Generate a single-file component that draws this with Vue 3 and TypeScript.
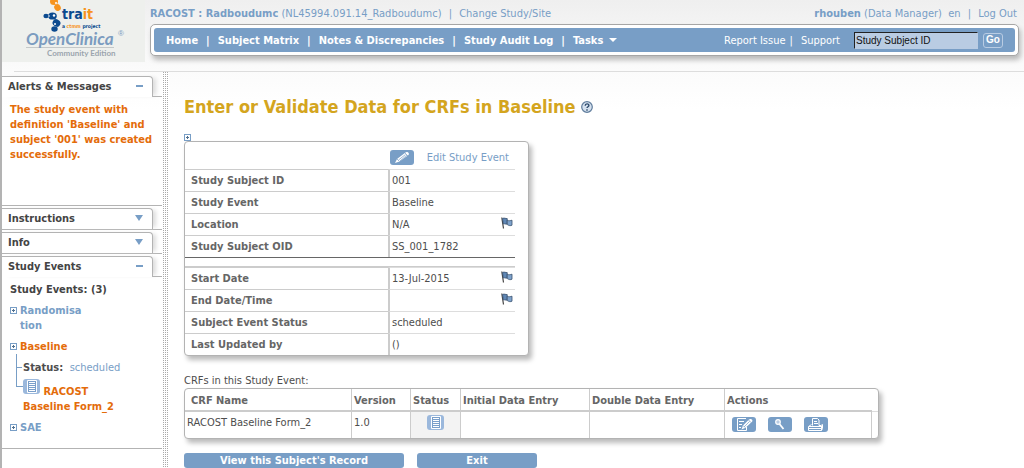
<script setup lang="ts">
interface DetailRow {
  label: string
  value: string
  flag?: boolean
}

const menu: string[] = ['Home', 'Subject Matrix', 'Notes & Discrepancies', 'Study Audit Log']

const sections: DetailRow[][] = [
  [
    { label: 'Study Subject ID', value: '001' },
    { label: 'Study Event', value: 'Baseline' },
    { label: 'Location', value: 'N/A', flag: true },
    { label: 'Study Subject OID', value: 'SS_001_1782' },
  ],
  [
    { label: 'Start Date', value: '13-Jul-2015', flag: true },
    { label: 'End Date/Time', value: '', flag: true },
    { label: 'Subject Event Status', value: 'scheduled' },
    { label: 'Last Updated by', value: '()' },
  ],
]
</script>

<template>
  <div class="page">
    <header class="top">
      <a href="#" class="logo" aria-label="OpenClinica home">
        <svg class="trait-mark" width="24" height="33" viewBox="0 0 24 33" aria-hidden="true">
          <g fill="#f7941d">
            <ellipse cx="13" cy="1.500" rx="4" ry="3.500" />
            <ellipse cx="16.500" cy="7.500" rx="3.200" ry="3.500" transform="rotate(-30 16.500 7.500)" />
          </g>
          <g fill="#0b4a8f">
            <ellipse cx="5" cy="16" rx="2.600" ry="2.200" />
            <ellipse cx="11.500" cy="16" rx="4.300" ry="3.600" />
            <ellipse cx="15.500" cy="23" rx="4" ry="3.600" transform="rotate(30 15.500 23)" />
            <ellipse cx="13.500" cy="29" rx="3.200" ry="2.800" />
          </g>
          <g fill="#fff">
            <circle cx="15" cy="3" r="1" />
            <circle cx="13" cy="15.500" r="1.200" />
            <circle cx="8" cy="16" r=".8" />
            <circle cx="14" cy="24" r="1" />
          </g>
        </svg>
        <span class="trait">tra<span>it</span></span>
        <span class="ctmm">a <span>ctmm</span> project</span>
        <span class="brand">OpenClinica</span>
        <span class="mark">®</span>
        <span class="edition">Community Edition</span>
      </a>
      <div class="head">
        <div class="userbar">
          <div>
            <a href="#"><b>RACOST : Radboudumc</b></a> (NL45994.091.14_Radboudumc)
            <i>|</i> <a href="#">Change Study/Site</a>
          </div>
          <div>
            <a href="#"><b>rhouben</b> (Data Manager)</a>&nbsp; en <i>|</i> <a href="#">Log Out</a>
          </div>
        </div>
        <nav class="navbox">
          <div class="navbar">
            <div class="menu">
              <template v-for="item in menu" :key="item">
                <a href="#">{{ item }}</a><span>|</span>
              </template>
              <a href="#" class="tasks">Tasks
                <svg width="8" height="4" viewBox="0 0 8 4" aria-hidden="true"><path d="M0 0h8L4 4z" fill="#fff" /></svg>
              </a>
            </div>
            <form class="search" @submit.prevent>
              <a href="#">Report Issue</a><span>|</span><a href="#" class="support">Support</a>
              <input type="text" value="Study Subject ID" aria-label="Study Subject ID">
              <button type="submit">Go</button>
            </form>
          </div>
        </nav>
      </div>
    </header>
    <hr class="rule">

    <div class="columns">
      <aside class="side">
        <section class="panel open">
          <h2 class="tab"><button type="button">Alerts &amp; Messages<span class="minus"></span></button></h2>
          <div class="body alerts">The study event with definition 'Baseline' and subject '001' was created successfully.</div>
        </section>
        <section class="panel">
          <h2 class="tab"><button type="button">Instructions<span class="down"></span></button></h2>
        </section>
        <section class="panel">
          <h2 class="tab"><button type="button">Info<span class="down"></span></button></h2>
        </section>
        <section class="panel open">
          <h2 class="tab"><button type="button">Study Events<span class="minus"></span></button></h2>
          <div class="body events">
            <p class="count">Study Events: (3)</p>
            <div class="event"><span class="plus"></span><a href="#">Randomisa<br>tion</a></div>
            <div class="event current"><span class="plus"></span><a href="#">Baseline</a></div>
            <div class="tree">
              <p class="status"><b>Status:</b> <a href="#">scheduled</a></p>
              <p class="form">
                <a href="#">
                  <svg width="17" height="15" viewBox="0 0 17 15" aria-hidden="true">
                    <rect width="17" height="15" rx="3" fill="#9bb8dc" />
                    <path d="M4.500 1.500h9v12h-9z" fill="#7a9fca" stroke="#fff" />
                    <path d="M6 3.500h6M6 5.500h6M6 7.500h6M6 9.500h6M6 11.500h6" stroke="#fff" />
                  </svg>
                  RACOST<br>Baseline Form_2</a>
              </p>
            </div>
            <div class="event"><span class="plus"></span><a href="#">SAE</a></div>
          </div>
        </section>
      </aside>
      <div class="grip"></div>

      <main class="main">
        <h1>Enter or Validate Data for CRFs in Baseline
          <a href="#" aria-label="Help">
            <svg width="12" height="12" viewBox="0 0 12 12" aria-hidden="true">
              <circle cx="6" cy="6" r="5.300" fill="#d5e1ef" stroke="#5f7c9c" stroke-width="1.200" />
              <path d="M4.200 4.800c0-2.500 3.700-2.500 3.700-.3 0 1.300-1.900 1.200-1.900 2.600M6 8.300v1.400" fill="none" stroke="#2d4a6b" stroke-width="1.400" />
            </svg>
          </a>
        </h1>
        <button type="button" class="plus expand" aria-label="Expand"></button>

        <div class="box details">
          <table v-for="(rows, index) in sections" :key="index">
            <colgroup><col class="c-label"><col></colgroup>
            <tbody>
              <tr v-if="index === 0" class="edit">
                <td colspan="2">
                  <a href="#">
                    <svg width="24" height="15" viewBox="0 0 24 15" aria-hidden="true">
                      <rect width="24" height="15" rx="3" fill="#789ec6" />
                      <path d="M5 13l2-4L15.500 2.500c1.500-1.500 4.500.5 3 2.500L9.500 11.500z" fill="#fff" />
                      <path d="M8.500 10l7-5.500M10 11l7-6M7 9l2.500 2.500M15 3l3 3" stroke="#789ec6" stroke-width=".7" />
                    </svg>
                    <span>Edit Study Event</span>
                  </a>
                </td>
              </tr>
              <tr v-for="row in rows" :key="row.label">
                <th scope="row">{{ row.label }}</th>
                <td>
                  <div class="cell">
                    <span>{{ row.value }}</span>
                    <a v-if="row.flag" href="#" aria-label="Discrepancy note">
                      <svg width="12" height="12" viewBox="0 0 12 12" aria-hidden="true">
                        <path d="M.8.500L2.500 11.500" stroke="#444" stroke-width="1.200" />
                        <path d="M1.500 1.500c2-1 3 .3 4.700 0v5.500c-1.700.5-2.200-.6-3.900 0z" fill="#5f87b5" stroke="#38516e" stroke-width=".8" />
                        <path d="M6.200 3.200c1.500.8 3.300.5 4.800 0v5c-1.500.8-3.300.5-4.800-.7z" fill="#7fa3cc" stroke="#38516e" stroke-width=".8" />
                      </svg>
                    </a>
                  </div>
                </td>
              </tr>
            </tbody>
          </table>
        </div>

        <p class="caption">CRFs in this Study Event:</p>
        <div class="box crfs">
          <table>
            <colgroup>
              <col class="c-name"><col class="c-version"><col class="c-status"><col class="c-initial"><col class="c-double"><col class="c-actions"><col>
            </colgroup>
            <thead>
              <tr>
                <th class="first">CRF Name</th><th>Version</th><th>Status</th><th>Initial Data Entry</th><th>Double Data Entry</th><th class="wide">Actions</th><td class="end"></td>
              </tr>
            </thead>
            <tbody>
              <tr>
                <td>RACOST Baseline Form_2</td>
                <td>1.0</td>
                <td class="state">
                  <svg width="17" height="15" viewBox="0 0 17 15" role="img" aria-label="Scheduled">
                    <rect width="17" height="15" rx="3" fill="#9bb8dc" />
                    <path d="M4.500 1.500h9v12h-9z" fill="#7a9fca" stroke="#fff" />
                    <path d="M6 3.500h6M6 5.500h6M6 7.500h6M6 9.500h6M6 11.500h6" stroke="#fff" />
                  </svg>
                </td>
                <td></td>
                <td></td>
                <td>
                  <div class="actions">
                    <a href="#" aria-label="Enter data">
                      <svg width="24" height="15" viewBox="0 0 24 15" aria-hidden="true">
                        <rect width="24" height="15" rx="3" fill="#789ec6" />
                        <path d="M14 1.500H5.500v12h9V10M7 4.500h5M7 7.500h3M7 10.500h2" fill="none" stroke="#fff" />
                        <path d="M9.500 12.500l1.500-4 6-6c1.500-1.500 4.500.3 3 2.300l-6.500 6z" fill="#fff" />
                        <path d="M12 10l5.500-5.500M11 8.500l2 2M16.500 3l2.500 2.500" stroke="#789ec6" stroke-width=".7" />
                      </svg>
                    </a>
                    <a href="#" aria-label="View">
                      <svg width="24" height="15" viewBox="0 0 24 15" aria-hidden="true">
                        <rect width="24" height="15" rx="3" fill="#789ec6" />
                        <circle cx="10" cy="5" r="2.300" fill="#b9cce3" stroke="#fff" stroke-width="1.200" />
                        <path d="M11.500 7l4 5" stroke="#fff" stroke-width="1.800" />
                      </svg>
                    </a>
                    <a href="#" aria-label="Print">
                      <svg width="24" height="15" viewBox="0 0 24 15" aria-hidden="true">
                        <rect width="24" height="15" rx="3" fill="#789ec6" />
                        <path d="M8.500 8.500v-7h5l1.500 1.500v5.500M10 4.500h3M10 6.500h4M7.500 7.500l-3 2v4h13v-4M15 8.500h2l1.500-1v4l-1 2M5 9.500h13M5 11.500h12" fill="none" stroke="#fff" />
                      </svg>
                    </a>
                  </div>
                </td>
                <td class="end"></td>
              </tr>
            </tbody>
          </table>
        </div>

        <div class="buttons">
          <button type="button" class="record">View this Subject's Record</button>
          <button type="button" class="exit">Exit</button>
        </div>
      </main>
    </div>
  </div>
</template>

<style>
body {
  margin: 0;
  background: #fff;
}
</style>

<style scoped>
.page {
  box-sizing: border-box;
  min-height: 100vh;
  display: flex;
  flex-direction: column;
  border-left: 2px solid #b3b3b3;
  background: linear-gradient(#efefef 0, #fbfbfb 70px, #fff 110px);
  font-family: Tahoma, "DejaVu Sans Condensed", "DejaVu Sans", sans-serif;
  font-size: 11px;
  line-height: 15px;
  color: #4d4d4d;
}
a {
  color: #789ec6;
  text-decoration: none;
}
button {
  font: inherit;
  cursor: pointer;
}
svg {
  display: block;
  flex: none;
}
.top {
  display: flex;
  gap: 5px;
  padding-right: 5px;
}
.logo {
  position: relative;
  flex: none;
  width: 143px;
  height: 62px;
  background: #eef0ed;
}
.logo > * {
  position: absolute;
  white-space: nowrap;
}
.trait-mark {
  left: 39px;
  top: 0;
}
.trait {
  left: 60px;
  top: 5px;
  font: bold 14px/18px "DejaVu Sans Condensed", sans-serif;
  color: #0b4a8f;
}
.trait span,
.ctmm span {
  color: #f7941d;
}
.ctmm {
  left: 60px;
  top: 23px;
  font: bold 5px/6px "DejaVu Sans Condensed", sans-serif;
  color: #0b4a8f;
}
.brand {
  left: 24px;
  top: 30px;
  border-bottom: 1px solid #c4c8c8;
  font: italic bold 17px/17px Lato, sans-serif;
  color: #7b9cc0;
}
.mark {
  left: 116px;
  top: 30px;
  font: 8px/8px "Liberation Sans", sans-serif;
  color: #7b9cc0;
}
.edition {
  left: 45px;
  top: 49px;
  font: bold 8px/8px Lato, sans-serif;
  color: #9ba5ae;
}
.head {
  flex: 1;
  min-width: 0;
}
.userbar {
  display: flex;
  justify-content: space-between;
  padding: 6px 2px 3px 0;
  color: #789ec6;
}
.userbar i {
  margin: 0 4px;
  font-style: normal;
}
.navbox {
  padding: 3px;
  border: 1px solid #a6a6a6;
  border-radius: 5px;
  background: #fff;
  box-shadow: 2px 4px 5px #bbb;
}
.navbar {
  display: flex;
  justify-content: space-between;
  align-items: center;
  height: 24px;
  padding: 0 12px;
  border-radius: 3px;
  background: #789ec6;
  color: #fff;
}
.navbar a {
  color: #fff;
}
.menu {
  display: flex;
  gap: 8px;
  font-weight: bold;
}
.tasks {
  display: flex;
  align-items: center;
  gap: 6px;
}
.search {
  display: flex;
  align-items: center;
  gap: 4px;
}
.support {
  margin: 0 10px 0 4px;
}
.search input {
  box-sizing: border-box;
  width: 124px;
  height: 17px;
  padding: 0 1px;
  border: 1px solid #b9cce3;
  border-top-color: #222;
  border-left-color: #222;
  background: #b9cce3;
  font: 10px "Liberation Sans", Arial, sans-serif;
  color: #111;
}
.search button {
  width: 20px;
  height: 15px;
  margin-left: 1px;
  padding: 0;
  border: 1px solid #b9cce3;
  border-radius: 3px;
  background: #789ec6;
  font: bold 10px/12px "Liberation Sans", Arial, sans-serif;
  color: #fff;
}
.rule {
  width: calc(100% - 12px);
  margin: 9px 0 0 12px;
  border: 0;
  border-top: 1px solid #ddd;
}
.columns {
  flex: 1;
  display: flex;
}
.side {
  flex: none;
  width: 160px;
  padding-top: 4px;
}
.panel {
  margin-bottom: 2px;
  border-bottom: 1px solid #b3b3b3;
}
.tab {
  position: relative;
  display: flex;
  margin: 0;
  padding-right: 9px;
  font-size: 11px;
}
.open .tab::after {
  content: "";
  position: absolute;
  right: 0;
  bottom: 0;
  width: 9px;
  border-bottom: 1px solid #b3b3b3;
}
.tab button {
  box-sizing: border-box;
  flex: 1;
  display: flex;
  justify-content: space-between;
  align-items: center;
  height: 21px;
  padding: 0 9px 2px 6px;
  border: 0;
  border-top: 1px solid #b3b3b3;
  border-right: 1px solid #b3b3b3;
  border-radius: 0 4px 0 0;
  background: #fff;
  box-shadow: 5px 0 4px -2px #ddd;
  color: #444;
}
.minus {
  width: 7px;
  height: 2px;
  background: #789ec6;
}
.down {
  border: 4px solid transparent;
  border-top: 6px solid #789ec6;
  border-bottom: 0;
}
.body {
  padding: 5px 8px;
}
.alerts {
  min-height: 98px;
  font-weight: bold;
  color: #e46c0a;
}
.events {
  padding-bottom: 13px;
  font-weight: bold;
}
.events p {
  margin: 0;
}
.count {
  color: #444;
}
.event {
  display: flex;
  align-items: flex-start;
  gap: 3px;
  margin-top: 6px;
}
.current a,
.form a {
  color: #e46c0a;
}
.plus {
  flex: none;
  box-sizing: border-box;
  width: 7px;
  height: 7px;
  margin-top: 4px;
  padding: 0;
  border: 1px solid #789ec6;
  background: linear-gradient(#50708f, #50708f) center / 3px 1px no-repeat, linear-gradient(#50708f, #50708f) center / 1px 3px no-repeat, #fff;
}
.tree {
  position: relative;
  margin-left: 6px;
  padding: 6px 0 0 7px;
}
.tree::before {
  content: "";
  position: absolute;
  left: 0;
  top: 0;
  width: 6px;
  height: 32px;
  border-left: 1px solid #789ec6;
  border-bottom: 1px solid #789ec6;
}
.status::before {
  content: "";
  position: absolute;
  left: 0;
  top: 13px;
  width: 6px;
  border-top: 1px solid #789ec6;
}
.status a {
  margin-left: 3px;
  font-weight: normal;
}
.form {
  padding-top: 4px;
}
.form svg {
  display: inline-block;
  vertical-align: 1px;
}
.grip {
  flex: none;
  width: 7px;
  background: conic-gradient(#aaa 25%, #fff 0) 0 0 / 2px 2px;
}
.main {
  flex: 1;
  min-width: 0;
  padding: 24px 15px 0;
}
h1 {
  display: flex;
  align-items: center;
  gap: 5px;
  margin: 0;
  font-size: 18px;
  line-height: 22px;
  color: #d4a51e;
}
.expand {
  display: block;
  margin-top: 16px;
}
.box {
  width: fit-content;
  border: 1px solid #b3b3b3;
  border-radius: 4px;
  background: #fff;
  box-shadow: 3px 4px 5px #bbb;
}
.details {
  padding-right: 13px;
}
table {
  border-collapse: separate;
  border-spacing: 0;
  table-layout: fixed;
}
.details table {
  width: 330px;
}
.c-label {
  width: 203px;
}
.details th,
.details td {
  box-sizing: border-box;
  height: 22px;
  padding: 0 2px;
  border-top: 1px solid #ccc;
}
th {
  text-align: left;
  color: #666;
}
.details th {
  padding-left: 6px;
}
.details td {
  border-left: 2px solid #ccc;
  border-top-color: #ddd;
}
.details .edit td {
  height: 27px;
  padding: 3px 6px 0 0;
  border: 0;
}
.edit a {
  display: flex;
  justify-content: flex-end;
  align-items: center;
  gap: 13px;
}
.cell {
  display: flex;
  justify-content: space-between;
  align-items: center;
}
.cell a {
  margin-bottom: 3px;
}
.details table + table {
  margin-top: 8px;
  border-top: 1px solid #ccc;
}
.details table:first-child {
  border-bottom: 1px solid #666;
}
.caption {
  margin: 18px 0 0;
  line-height: 14px;
}
.crfs table {
  width: 693px;
}
.c-name { width: 167px; }
.c-version { width: 59px; }
.c-status { width: 50px; }
.c-initial { width: 129px; }
.c-double { width: 135px; }
.c-actions { width: 147px; }
.crfs th,
.crfs td {
  box-sizing: border-box;
  padding: 0 2px;
  border-right: 1px solid #ccc;
  vertical-align: top;
}
.crfs th {
  height: 23px;
  padding-top: 4px;
  border-bottom: 2px solid #ccc;
}
.crfs .first {
  padding-left: 6px;
}
.crfs td {
  height: 26px;
  padding-top: 3px;
}
.crfs .wide,
.crfs .end {
  border-right: 0;
}
.crfs thead .end {
  height: 23px;
  border-bottom: 1px solid #ddd;
}
.crfs .state {
  background: #f3f3f3;
}
.state svg {
  margin: 0 auto;
}
.actions {
  display: flex;
  gap: 12px;
  padding: 2px 5px;
}
.buttons {
  display: flex;
  gap: 13px;
  margin-top: 14px;
}
.buttons button {
  height: 15px;
  padding: 0;
  border: 0;
  border-radius: 3px;
  background: #789ec6;
  font-weight: bold;
  line-height: 13px;
  color: #fff;
}
.record { width: 220px; }
.exit { width: 120px; }
</style>
